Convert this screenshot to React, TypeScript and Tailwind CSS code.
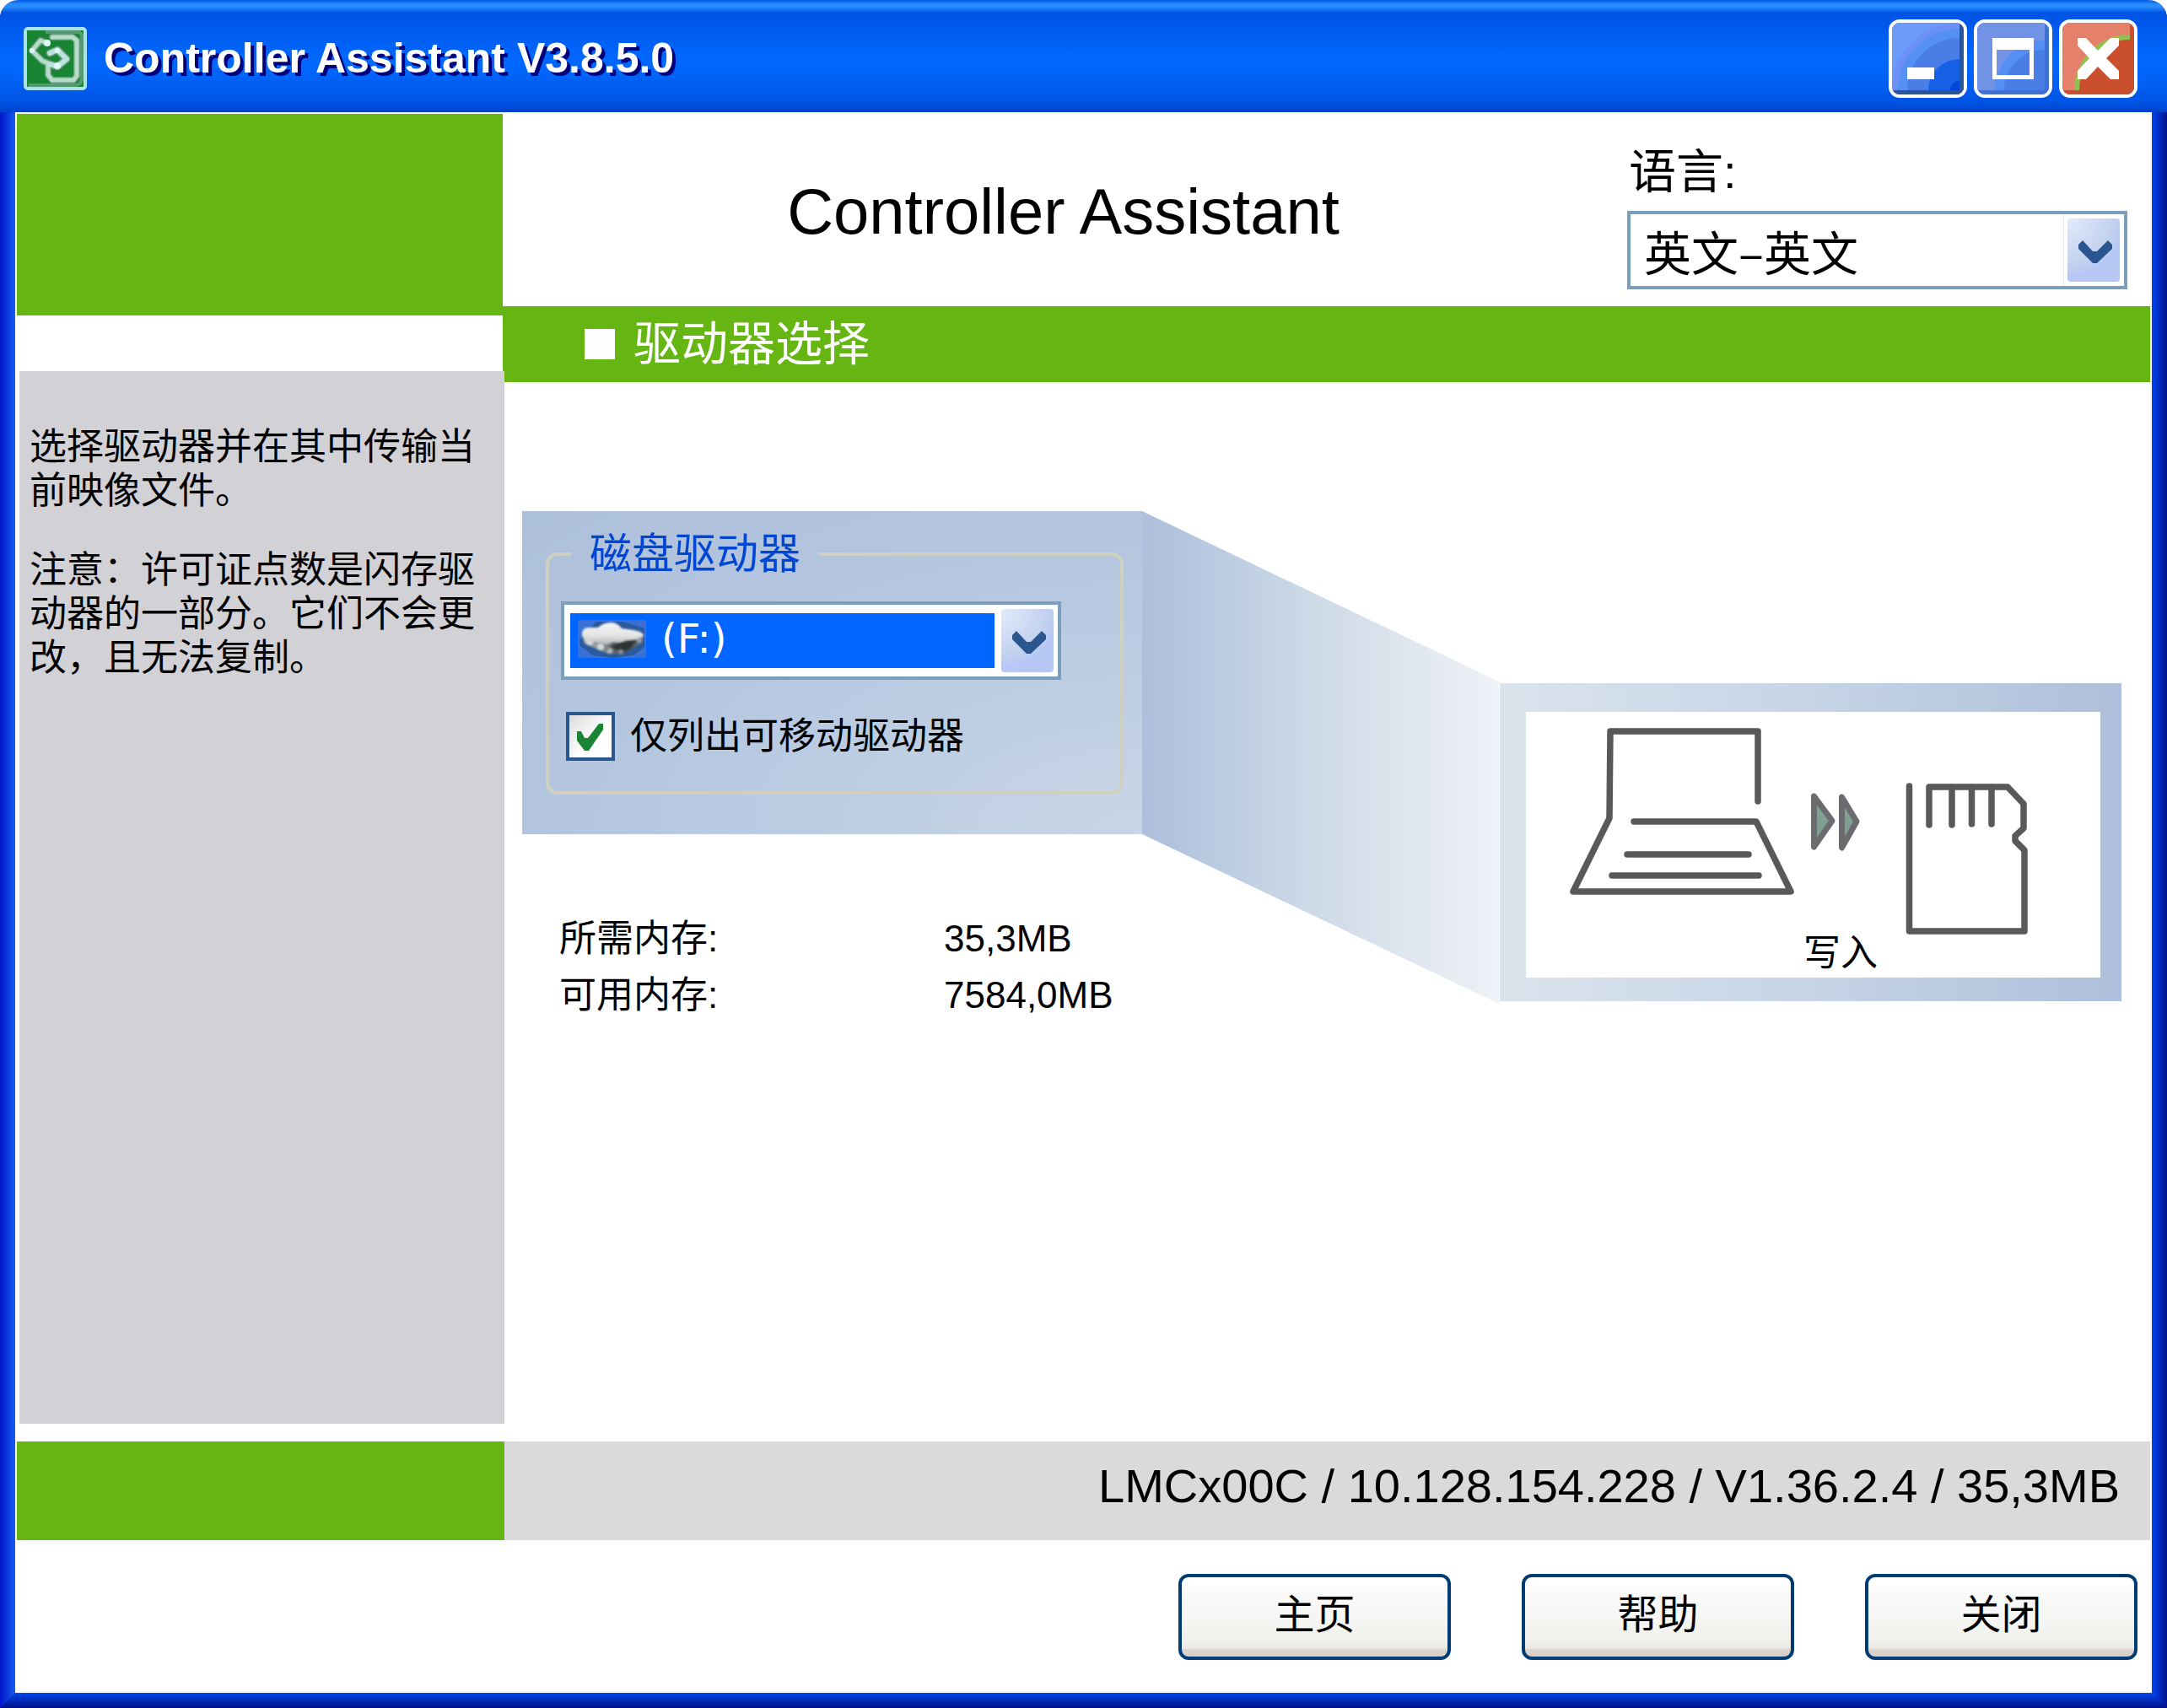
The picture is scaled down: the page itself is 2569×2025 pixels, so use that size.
import React, { useState } from 'react';
import clsx from 'clsx';

interface SelectBoxProps {
  id: string;
  value: string;
  options: string[];
  label?: string;
  icon?: React.ReactNode;
  highlighted?: boolean;
  onChange: (value: string) => void;
}

function AppIcon() {
  return (
    <svg className="h-[75px] w-[75px] shrink-0" viewBox="0 0 75 75" fill="none" aria-hidden="true">
      <rect x="2" y="2" width="71" height="71" rx="3" fill="#188434" stroke="#a9e2ee" strokeWidth="4" />
      <path d="M26 6H66L69 9V60Q69 69 60 69H6" stroke="#559a70" strokeWidth="4" />
      <g strokeLinecap="round" strokeLinejoin="round">
        <path
          d="M28 19L20 16L10 28L22 40L29 43V57L34 63H59L63 58V16L58 12H34"
          stroke="#6a9c80"
          strokeWidth="8"
        />
        <path d="M31 31L40 27L51 38L40 47L31 44" stroke="#6a9c80" strokeWidth="9" />
        <path
          d="M28 19L20 16L10 28L22 40L29 43V57L34 63H59L63 58V16L58 12H34"
          stroke="#b5dcc6"
          strokeWidth="5"
        />
        <path d="M31 31L40 27L51 38L40 47L31 44" stroke="#b9e4dc" strokeWidth="6" />
      </g>
      <circle cx="28" cy="19" r="4" fill="#dff7fb" />
      <circle cx="10" cy="28" r="3" fill="#dff7fb" />
      <circle cx="40" cy="28" r="3" fill="#dff7fb" />
      <circle cx="40" cy="46" r="4" fill="#dff7fb" />
    </svg>
  );
}

function MinimizeIcon() {
  return (
    <svg className="h-[85px] w-[85px]" viewBox="4 4 85 85" aria-hidden="true">
      <rect width="93" height="93" fill="#6c9af8" />
      <circle cx="84" cy="84" r="80" fill="#6b90f6" />
      <circle cx="84" cy="84" r="73" fill="#5590f4" />
      <circle cx="84" cy="84" r="62" fill="#4a7ee6" />
      <circle cx="84" cy="84" r="37" fill="#1660e6" />
      <circle cx="84" cy="84" r="11" fill="#0047d8" />
      <path d="M84 0H93V93H0V84H84Z" fill="#2a5699" />
      <path d="M22 57H54V71H22Z" fill="#fff" />
    </svg>
  );
}

function MaximizeIcon() {
  return (
    <svg className="h-[85px] w-[85px]" viewBox="4 4 85 85" aria-hidden="true">
      <rect width="93" height="93" fill="#7292e6" />
      <circle cx="84" cy="84" r="59" fill="#558ef4" />
      <circle cx="84" cy="84" r="48" fill="#4a7ee6" />
      <path d="M84 0H93V93H0V84H84Z" fill="#3f70d4" />
      <path d="M22 22H71V71H22ZM27 36V66H66V36Z" fill="#fff" fillRule="evenodd" />
    </svg>
  );
}

function CloseIcon() {
  return (
    <svg className="h-[85px] w-[85px]" viewBox="4 4 85 85" aria-hidden="true">
      <rect width="93" height="93" fill="#e5806a" />
      <circle cx="84" cy="84" r="66" fill="#92c050" />
      <circle cx="84" cy="84" r="60" fill="#c94f2e" />
      <path d="M84 0H93V93H0V84H84Z" fill="#c94f2e" />
      <path
        d="M22 22H32L46 37L61 22H71V31L56 46L71 61V71H61L46 56L32 71H22V61L36 46L22 31Z"
        fill="#fff"
      />
    </svg>
  );
}

function DriveIcon() {
  return (
    <svg className="h-[45px] w-[81px]" viewBox="0 0 81 45" aria-hidden="true">
      <defs>
        <linearGradient id="drive-top" x1="0" y1="0" x2="0" y2="1">
          <stop offset="0" stopColor="#f4f4f4" />
          <stop offset="0.6" stopColor="#e4e4e4" />
          <stop offset="1" stopColor="#b4b6b6" />
        </linearGradient>
        <linearGradient id="drive-side" x1="0" y1="0" x2="1" y2="0">
          <stop offset="0" stopColor="#b4b8bc" />
          <stop offset="0.4" stopColor="#7c8488" />
          <stop offset="0.7" stopColor="#3c4448" />
          <stop offset="1" stopColor="#6d7d8c" />
        </linearGradient>
        <filter id="drive-soft" x="-10%" y="-10%" width="120%" height="120%">
          <feGaussianBlur stdDeviation="1" />
        </filter>
      </defs>
      <rect width="81" height="45" rx="2" fill="#3a70d6" />
      <path d="M2 24L22 2H54L79 10V32L66 42L42 45L18 42L3 31Z" fill="#2a5a9c" />
      <g filter="url(#drive-soft)">
        <path d="M5 14L8 28L26 36L36 40L52 40L64 35L76 27L78 16L50 22Z" fill="url(#drive-side)" />
        <path
          d="M5 18Q4 9 14 9L24 9Q30 3 40 3Q48 4 52 10L66 12Q78 14 78 19L70 23L58 24L50 27L42 26L34 29L26 27L18 25L8 25Z"
          fill="url(#drive-top)"
        />
        <path d="M38 31L52 26L70 24L62 34L52 37L44 35Z" fill="#2f3436" />
        <circle cx="14" cy="26" r="4" fill="#d4d6d8" />
        <circle cx="27" cy="32" r="4" fill="#d4d6d8" />
        <circle cx="38" cy="37" r="3" fill="#b4b8ba" />
        <circle cx="51" cy="38" r="3" fill="#84898c" />
        <circle cx="73" cy="24" r="3" fill="#9aa0a4" />
      </g>
    </svg>
  );
}

function SelectBox({ id, value, options, label, icon, highlighted, onChange }: SelectBoxProps) {
  return (
    <div className="relative flex h-[93px] w-[593px] border-4 border-[#7b9ebd] bg-white">
      {icon && <span className="pointer-events-none absolute top-[18px] left-4">{icon}</span>}
      <select
        id={id}
        aria-label={label}
        value={value}
        onChange={(e) => onChange(e.target.value)}
        className={clsx(
          'min-w-0 flex-1 appearance-none rounded-none outline-none',
          highlighted
            ? 'my-[10px] mr-2 ml-[7px] bg-[#0066ff] pb-[6px] pl-[108px] font-["DejaVu_Sans",sans-serif] text-[48px] leading-[56px] text-white'
            : 'mr-1 border-r border-[#e4ecf6] bg-white pl-4 font-["Noto_Sans_CJK_SC",sans-serif] text-[56px] leading-[72px] text-black'
        )}
      >
        {options.map((option) => (
          <option key={option} value={option}>
            {option}
          </option>
        ))}
      </select>
      <span className="pointer-events-none my-[5px] mr-[5px] flex w-[62px] items-center justify-center rounded bg-[radial-gradient(circle_at_top_left,#e0ecfa_0%,#d0daf4_35%,#c2d2ee_55%,#b8c8f6_70%,#b4c6f2_100%)] pt-1 pl-1">
        <svg className="h-[27px] w-10" viewBox="0 0 40 27" aria-hidden="true">
          <path d="M5 0L0 5V10L17 27H22L40 10V5L35 0L22 13H17Z" fill="#2a568f" />
        </svg>
      </span>
    </div>
  );
}

function TransferDrawing() {
  return (
    <svg className="h-[264px] w-[681px]" viewBox="0 0 681 264" fill="none" aria-hidden="true">
      <g stroke="#595959" strokeWidth="7.5" strokeLinecap="round" strokeLinejoin="round">
        {/* notebook */}
        <path d="M128 130H273L314 213H56L99 126L100 23H275V106" />
        <path d="M120 169H264M102 194H276" />
        {/* memory card */}
        <path d="M454.500 88V260H591V164L580 153V147L590 138V109L571 89H478V134" />
        <path d="M505 89V134M528.500 89V133M552 89V133" />
      </g>
      <g fill="#80a093" stroke="#6c6c70" strokeWidth="7" strokeLinejoin="round">
        <path d="M341.500 100L363 129L341.500 160Z" />
        <path d="M374.500 101L392 130L374.500 161Z" />
      </g>
    </svg>
  );
}

export default function App() {
  const [language, setLanguage] = useState('英文–英文');
  const [drive, setDrive] = useState('(F:)');
  const [removableOnly, setRemovableOnly] = useState(true);

  const windowButtons = [
    { name: '最小化', icon: <MinimizeIcon /> },
    { name: '最大化', icon: <MaximizeIcon /> },
    { name: '关闭窗口', icon: <CloseIcon /> },
  ];

  const memory = [
    { label: '所需内存:', value: '35,3MB' },
    { label: '可用内存:', value: '7584,0MB' },
  ];

  return (
    <div className="flex min-h-screen flex-col overflow-hidden rounded-t-[22px] bg-[linear-gradient(to_right,#0016cc_0,#165cee_18px,#fff_18px,#fff_calc(100%_-_18px),#0044f0_calc(100%_-_18px),#00128c_100%)] font-['Liberation_Sans','Noto_Sans_CJK_SC',sans-serif] text-black">
      {/* Title bar */}
      <header className="flex h-[133px] items-center bg-[linear-gradient(to_bottom,#0058e6_0,#288eff_5px,#288eff_8px,#0054e3_15px,#0058ea_28px,#0068ff_70px,#0066fc_84px,#0054e4_122px,#0040cc_133px)] pt-[5px] pr-[35px] pl-7">
        <AppIcon />
        <span className="ml-5 flex-1 text-[50px] leading-[60px] font-bold text-white [text-shadow:4px_4px_0_#00007b]">
          Controller Assistant V3.8.5.0
        </span>
        <div className="flex gap-2">
          {windowButtons.map((button) => (
            <button
              key={button.name}
              aria-label={button.name}
              className="h-[93px] w-[93px] overflow-hidden rounded-[13px] border-4 border-white"
            >
              {button.icon}
            </button>
          ))}
        </div>
      </header>

      <div className="mx-[18px] flex flex-1 flex-col">
        <div className="flex flex-1">
          {/* Help column */}
          <aside className="flex w-[578px] shrink-0 flex-col pt-0.5 pl-0.5">
            <div className="h-[239px] bg-[#65b513]" />
            <div className="relative mt-[66px] -mr-0.5 mb-[21px] ml-[3px] flex flex-1 flex-col gap-[42px] bg-[#d2d1d6] pt-16 pl-3 text-[44px] leading-[52px]">
              <p>选择驱动器并在其中传输当前映像文件。</p>
              <p>注意：许可证点数是闪存驱动器的一部分。它们不会更改，且无法复制。</p>
            </div>
          </aside>

          <main className="min-w-0 flex-1">
            <div className="flex h-[230px] items-start pr-[29px]">
              <h1 className="flex-1 self-center pt-[6px] pr-1 text-center text-[76px] leading-[84px]">
                Controller Assistant
              </h1>
              <div className="flex flex-col gap-[18px] pt-[43px]">
                <label htmlFor="language" className="pl-0.5 text-[56px] leading-[56px]">
                  语言:
                </label>
                <SelectBox
                  id="language"
                  value={language}
                  options={['英文–英文']}
                  onChange={setLanguage}
                />
              </div>
            </div>

            <div className="mr-0.5 flex h-[90px] items-center gap-[22px] bg-[#65b513] pl-[97px]">
              <span className="h-9 w-9 bg-white" />
              <h2 className="text-[56px] leading-[72px] text-white">驱动器选择</h2>
            </div>

            <div className="flex pt-[153px] pr-9 pl-[23px]">
              <div className="w-[735px] shrink-0">
                <div className="bg-[radial-gradient(ellipse_at_bottom_right,#c8d5e6_0%,#c2d1e4_20%,#b9cbe2_45%,#b3c4de_70%,#adc0da_100%)] px-7 pt-[26px] pb-[47px]">
                  <fieldset className="w-[685px] rounded-[14px] border-4 border-[#d0d0bf] pb-9 pl-[14px]">
                    <legend className="ml-3 px-[22px] text-[50px] leading-[50px] text-[#0046d5]">
                      磁盘驱动器
                    </legend>
                    <div className="mt-[31px]">
                      <SelectBox
                        id="drive"
                        label="磁盘驱动器"
                        value={drive}
                        options={['(F:)']}
                        icon={<DriveIcon />}
                        highlighted
                        onChange={setDrive}
                      />
                    </div>
                    <div className="mt-[38px] ml-[6px] flex items-center gap-[18px]">
                      <span className="relative h-[58px] w-[58px]">
                        <input
                          id="removable"
                          type="checkbox"
                          checked={removableOnly}
                          onChange={(e) => setRemovableOnly(e.target.checked)}
                          className="block h-[58px] w-[58px] appearance-none border-4 border-[#2a568f] bg-linear-to-br from-[#dcdcdc] to-white to-60%"
                        />
                        {removableOnly && (
                          <svg
                            className="pointer-events-none absolute top-[14px] left-[13px] h-8 w-[31px]"
                            viewBox="0 0 31 32"
                            aria-hidden="true"
                          >
                            <path d="M0 9H5L9 17H13L26 0H31V7L14 32H9L0 20Z" fill="#188434" />
                          </svg>
                        )}
                      </span>
                      <label htmlFor="removable" className="text-[44px] leading-[52px]">
                        仅列出可移动驱动器
                      </label>
                    </div>
                  </fieldset>
                </div>

                <dl className="mt-[90px] grid grid-cols-[456px_auto] pl-11 text-[44px] leading-[67px]">
                  {memory.map((row) => (
                    <React.Fragment key={row.label}>
                      <dt>{row.label}</dt>
                      <dd>{row.value}</dd>
                    </React.Fragment>
                  ))}
                </dl>
              </div>

              {/* Beam that joins the drive panel to the transfer panel */}
              <svg
                className="mr-px h-[584px] min-w-0 flex-1"
                viewBox="0 0 423 584"
                preserveAspectRatio="none"
                aria-hidden="true"
              >
                <defs>
                  <linearGradient id="beam">
                    <stop offset="0" stopColor="#adbfda" />
                    <stop offset="0.2" stopColor="#b9cae1" />
                    <stop offset="0.45" stopColor="#ccd8e7" />
                    <stop offset="0.7" stopColor="#dce4ed" />
                    <stop offset="1" stopColor="#eff2f7" />
                  </linearGradient>
                </defs>
                <path d="M0 0L423 202V584L0 383Z" fill="url(#beam)" />
              </svg>

              <figure className="mt-[204px] h-[377px] shrink-0 bg-linear-to-r from-[#dae4ed] via-[#c6d4e6] to-[#adbfda] pt-[34px] pr-[25px] pl-[31px]">
                <div className="h-[315px] bg-white">
                  <TransferDrawing />
                  <figcaption className="pl-[329px] text-[44px] leading-[44px]">写入</figcaption>
                </div>
              </figure>
            </div>
          </main>
        </div>

        {/* Status bar */}
        <div className="flex h-[117px] px-0.5">
          <div className="w-[578px] bg-[#65b513]" />
          <p className="flex flex-1 items-center justify-end bg-[#dadada] pr-9 pb-3 text-[56px] leading-[64px]">
            LMCx00C / 10.128.154.228 / V1.36.2.4 / 35,3MB
          </p>
        </div>

        <div className="flex justify-end gap-[84px] pt-10 pr-[17px] pb-[39px]">
          {['主页', '帮助', '关闭'].map((name) => (
            <button
              key={name}
              className="h-[102px] w-[323px] rounded-[12px] border-4 border-[#003c74] bg-[linear-gradient(to_bottom,#fff_0,#fff_9px,#fafafa_12px,#f6f6f5_45px,#f0f0ec_76px,#ece8e4_84px,#dcd4ce_86px,#d6cec6_94px)] pb-1 text-[48px] leading-[60px]"
            >
              {name}
            </button>
          ))}
        </div>
      </div>

      <div className="h-[18px] bg-linear-to-b from-[#0046f0] to-[#001088] [clip-path:polygon(18px_0,calc(100%_-_18px)_0,100%_100%,0_100%)]" />
    </div>
  );
}
